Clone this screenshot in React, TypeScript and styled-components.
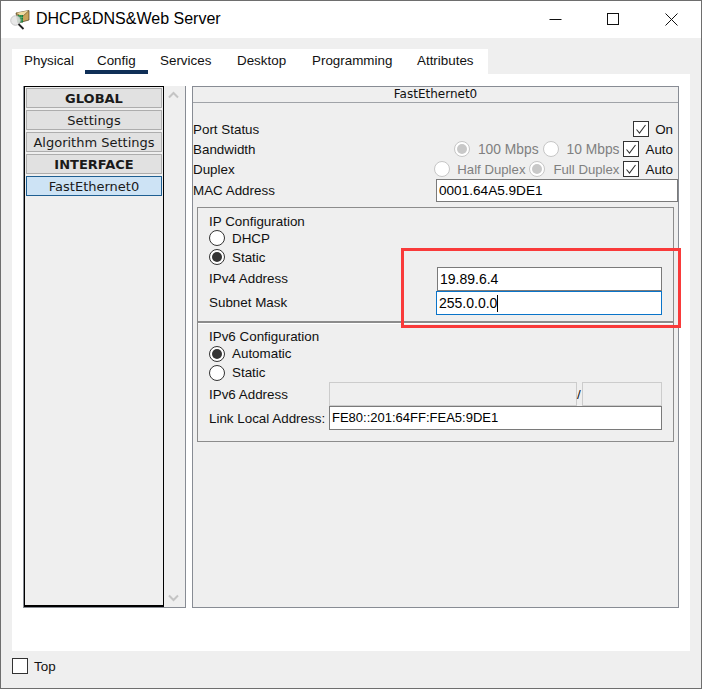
import * as React from "react";
import styled, { createGlobalStyle } from "styled-components";

const GlobalStyle = createGlobalStyle`
  html, body {
    margin: 0;
    padding: 0;
    background: #efefef;
  }
  * {
    box-sizing: border-box;
  }
`;

const UI_FONT = `"Liberation Sans", Arial, sans-serif`;
const LIST_FONT = `"DejaVu Sans", Verdana, sans-serif`;

const SWindow = styled.div`
  position: relative;
  width: 702px;
  height: 689px;
  border: 1px solid #6e6e6e;
  background: #efefef;
  font-family: ${UI_FONT};
  font-size: 13.4px;
  color: #111;
  overflow: hidden;
`;
const STitleBar = styled.div`
  height: 37px;
  background: #fff;
  display: flex;
  align-items: center;
  padding-left: 9px;
`;
const STitle = styled.div`
  margin-left: 6px;
  padding-bottom: 1px;
  font-size: 16px;
  color: #000;
  flex: 1;
`;
const SWinButtons = styled.div`
  display: flex;
  align-items: center;
  margin-right: 23px;
  gap: 45px;
`;
const SBody = styled.div`
  padding: 11px 11px 0;
`;
const STabs = styled.div`
  display: flex;
  width: 476px;
  height: 25px;
  background: #fff;
  padding-left: 12px;
`;
const STab = styled.div<{ $active?: boolean; $width: number; $mr?: number }>`
  width: ${(p) => p.$width}px;
  height: 25px;
  margin-right: ${(p) => p.$mr ?? 0}px;
  line-height: 24px;
  white-space: nowrap;
  padding-left: ${(p) => (p.$active ? 12 : 0)}px;
  border-bottom: ${(p) => (p.$active ? "4px solid #0f2f57" : "none")};
`;
const SPanel = styled.div`
  height: 577px;
  background: #fff;
  padding: 12px 11px 0;
  display: flex;
  gap: 6px;
  align-items: flex-start;
`;
const SSide = styled.div`
  width: 163px;
  height: 522px;
  display: flex;
  background: #efefef;
  border: 1px solid #888c94;
  border-top: none;
`;
const SList = styled.div`
  width: 140px;
  height: 521px;
  border: 1px solid #000;
  border-bottom-width: 2px;
  padding: 1px;
  display: flex;
  flex-direction: column;
  gap: 2px;
`;
const SListItem = styled.div<{ $head?: boolean; $active?: boolean }>`
  height: 20px;
  line-height: 19px;
  text-align: center;
  font-family: ${LIST_FONT};
  font-size: 13px;
  font-weight: ${(p) => (p.$head ? 700 : 400)};
  color: #1a1a1a;
  background: ${(p) => (p.$active ? "#cde3f5" : "#e1e1e1")};
  border: 1px solid ${(p) => (p.$active ? "#1f5f92" : "#adadad")};
  white-space: nowrap;
`;
const SScroll = styled.div`
  width: 21px;
  display: flex;
  flex-direction: column;
  justify-content: space-between;
  align-items: center;
  padding: 5px 2px 5px 0;
`;
const SMain = styled.div`
  width: 488px;
  height: 522px;
  border: 1px solid #888c94;
  background: #efefef;
`;
const SMainHead = styled.div`
  height: 15px;
  line-height: 14px;
  text-align: center;
  font-family: ${LIST_FONT};
  font-size: 12px;
  border-bottom: 1px solid #a0a3a8;
  box-sizing: content-box;
`;
const SMainContent = styled.div`
  padding-top: 16px;
`;
const SRow = styled.div<{ $h: number }>`
  height: ${(p) => p.$h}px;
  display: flex;
  align-items: center;
  justify-content: space-between;
  white-space: nowrap;
`;
const SControls = styled.div`
  display: flex;
  align-items: center;
  padding-right: 5px;
`;
const SLabel = styled.span<{ $disabled?: boolean; $ml?: number; $mr?: number; $size?: number }>`
  color: ${(p) => (p.$disabled ? "#808080" : "#111")};
  font-size: ${(p) => p.$size ?? 13.4}px;
  margin-left: ${(p) => p.$ml ?? 0}px;
  margin-right: ${(p) => p.$mr ?? 0}px;
`;
const SCheck = styled.span`
  width: 16px;
  height: 16px;
  border: 1px solid #333;
  background: #fff;
  display: inline-flex;
  align-items: center;
  justify-content: center;
  flex: none;
`;
const SRadio = styled.span<{ $on?: boolean; $disabled?: boolean }>`
  width: 16px;
  height: 16px;
  border-radius: 50%;
  border: 1px solid ${(p) => (p.$disabled ? "#c6c6c6" : "#333")};
  background: #fff;
  display: inline-flex;
  align-items: center;
  justify-content: center;
  flex: none;
  &::after {
    content: "";
    display: ${(p) => (p.$on ? "block" : "none")};
    width: 10px;
    height: 10px;
    border-radius: 50%;
    background: ${(p) => (p.$disabled ? "#c8c8c8" : "#333")};
  }
`;
const SField = styled.div<{ $w: number; $h?: number; $size?: number; $focus?: boolean; $off?: boolean }>`
  width: ${(p) => p.$w}px;
  height: ${(p) => p.$h ?? 24}px;
  flex: none;
  font-size: ${(p) => p.$size ?? 13.4}px;
  line-height: 22px;
  padding-left: ${(p) => (p.$off ? 0 : 2)}px;
  background: ${(p) => (p.$off ? "#efefef" : "#fff")};
  border: 1px solid ${(p) => (p.$focus ? "#0a74c9" : p.$off ? "#cccccc" : "#7a7a7a")};
  color: #000;
`;
const SCaret = styled.span`
  display: inline-block;
  width: 1px;
  height: 17px;
  background: #000;
  vertical-align: -4px;
`;
const SGroup = styled.div`
  width: 477px;
  height: 235px;
  margin: 5px 0 0 4px;
  border: 1px solid #8c8c8c;
`;
const SIpSection = styled.div`
  height: 115px;
  padding: 5px 11px 0;
  border-bottom: 2px solid #8c8c8c;
  box-shadow: 0 1px 0 #fff;
`;
const SIp6Section = styled.div`
  padding: 5px 11px 0;
`;
const SHeading = styled.div`
  height: 16px;
  line-height: 18px;
`;
const SRadioRow = styled.div<{ $h: number }>`
  height: ${(p) => p.$h}px;
  display: flex;
  align-items: center;
  gap: 7px;
`;
const SFieldRow = styled.div<{ $h: number }>`
  height: ${(p) => p.$h}px;
  display: flex;
  align-items: center;
  justify-content: space-between;
  white-space: nowrap;
`;
const SFieldLabel = styled.span<{ $pb?: number }>`
  padding-bottom: ${(p) => p.$pb ?? 0}px;
`;
const SFieldPair = styled.div`
  display: flex;
  align-items: center;
`;
const SSlash = styled.span`
  width: 5px;
  line-height: 24px;
  padding-top: 2px;
`;
const SFooter = styled.div`
  display: flex;
  align-items: flex-start;
  gap: 6px;
  height: 37px;
  padding-top: 7px;
  line-height: 18px;
`;
const SMark = styled.div`
  position: absolute;
  left: 400px;
  top: 247px;
  width: 280px;
  height: 80px;
  border: 3px solid #f93a3a;
  pointer-events: none;
`;

const Tick = () => (
  <svg width="12" height="12" viewBox="0 0 12 12">
    <path d="M1.5 6.5 L4.5 10 L10.5 2" fill="none" stroke="#333" strokeWidth="1.1" />
  </svg>
);

const Chevron = ({ down }: { down?: boolean }) => (
  <svg width="11" height="8" viewBox="0 0 11 8">
    <path d={down ? "M1 1.5 L5.5 6 L10 1.5" : "M1 6.5 L5.5 2 L10 6.5"} fill="none" stroke="#c4c4c4" strokeWidth="2" />
  </svg>
);

const AppIcon = () => (
  <svg width="20" height="20" viewBox="0 0 20 20">
    <path d="M6 3 L19 0.5 L19 10 L8 13 Z" fill="#c9a35a" stroke="#4d3a1a" strokeWidth="0.7" />
    <path d="M6 3 L12 7 L19 0.5" fill="#efd9a0" stroke="#5a4520" strokeWidth="0.6" />
    <rect x="7.5" y="5" width="5.5" height="7.5" fill="#1c7a3a" />
    <path d="M9.3 5v7.5M11.1 5v7.5M7.5 7.5h5.5M7.5 10h5.5" stroke="#7fc78f" strokeWidth="0.5" />
    <circle cx="5.5" cy="10.5" r="4.8" fill="#e4e4e4" fillOpacity="0.85" stroke="#bdbdbd" strokeWidth="0.8" />
    <path d="M8.5 14 L13.5 19" stroke="#222" strokeWidth="1.8" />
  </svg>
);

const WinButtons = () => (
  <SWinButtons>
    <svg width="13" height="13" viewBox="0 0 13 13">
      <path d="M0.5 6.5 H12.5" stroke="#111" strokeWidth="1" />
    </svg>
    <svg width="13" height="13" viewBox="0 0 13 13">
      <rect x="0.5" y="0.5" width="11" height="11" fill="none" stroke="#111" strokeWidth="1" />
    </svg>
    <svg width="13" height="13" viewBox="0 0 13 13">
      <path d="M0.5 0.5 L12.5 12.5 M12.5 0.5 L0.5 12.5" stroke="#111" strokeWidth="1" />
    </svg>
  </SWinButtons>
);

const tabs = [
  { name: "Physical", width: 61 },
  { name: "Config", width: 63, mr: 12, active: true },
  { name: "Services", width: 77 },
  { name: "Desktop", width: 75 },
  { name: "Programming", width: 105 },
  { name: "Attributes", width: 70 },
];

const App = () => {
  return (
    <SWindow>
      <GlobalStyle />
      <STitleBar>
        <AppIcon />
        <STitle>DHCP&amp;DNS&amp;Web Server</STitle>
        <WinButtons />
      </STitleBar>
      <SBody>
        <STabs>
          {tabs.map((tab) => (
            <STab key={tab.name} $active={tab.active} $width={tab.width} $mr={tab.mr}>
              {tab.name}
            </STab>
          ))}
        </STabs>
        <SPanel>
          <SSide>
            <SList>
              <SListItem $head>GLOBAL</SListItem>
              <SListItem>Settings</SListItem>
              <SListItem>Algorithm Settings</SListItem>
              <SListItem $head>INTERFACE</SListItem>
              <SListItem $active>FastEthernet0</SListItem>
            </SList>
            <SScroll>
              <Chevron />
              <Chevron down />
            </SScroll>
          </SSide>
          <SMain>
            <SMainHead>FastEthernet0</SMainHead>
            <SMainContent>
              <SRow $h={20}>
                <span>Port Status</span>
                <SControls>
                  <SCheck><Tick /></SCheck>
                  <SLabel $ml={6}>On</SLabel>
                </SControls>
              </SRow>
              <SRow $h={20}>
                <span>Bandwidth</span>
                <SControls>
                  <SRadio $on $disabled />
                  <SLabel $disabled $ml={8} $mr={4} $size={13.8}>100 Mbps</SLabel>
                  <SRadio $disabled />
                  <SLabel $disabled $ml={8} $mr={4} $size={13.8}>10 Mbps</SLabel>
                  <SCheck><Tick /></SCheck>
                  <SLabel $ml={6}>Auto</SLabel>
                </SControls>
              </SRow>
              <SRow $h={20}>
                <span>Duplex</span>
                <SControls>
                  <SRadio $disabled />
                  <SLabel $disabled $ml={7} $mr={4} $size={13.2}>Half Duplex</SLabel>
                  <SRadio $on $disabled />
                  <SLabel $disabled $ml={8} $mr={4} $size={13.2}>Full Duplex</SLabel>
                  <SCheck><Tick /></SCheck>
                  <SLabel $ml={6}>Auto</SLabel>
                </SControls>
              </SRow>
              <SRow $h={23}>
                <span>MAC Address</span>
                <SField $w={242} $h={23} $size={13.6}>0001.64A5.9DE1</SField>
              </SRow>
              <SGroup>
                <SIpSection>
                  <SHeading>IP Configuration</SHeading>
                  <SRadioRow $h={18}>
                    <SRadio />
                    DHCP
                  </SRadioRow>
                  <SRadioRow $h={20}>
                    <SRadio $on />
                    Static
                  </SRadioRow>
                  <SFieldRow $h={24}>
                    <SFieldLabel $pb={2}>IPv4 Address</SFieldLabel>
                    <SField $w={225} $size={14}>19.89.6.4</SField>
                  </SFieldRow>
                  <SFieldRow $h={24}>
                    <SFieldLabel $pb={2}>Subnet Mask</SFieldLabel>
                    <SField $w={226} $size={14} $focus>255.0.0.0<SCaret /></SField>
                  </SFieldRow>
                </SIpSection>
                <SIp6Section>
                  <SHeading>IPv6 Configuration</SHeading>
                  <SRadioRow $h={19}>
                    <SRadio $on />
                    Automatic
                  </SRadioRow>
                  <SRadioRow $h={19}>
                    <SRadio />
                    Static
                  </SRadioRow>
                  <SFieldRow $h={24}>
                    <SFieldLabel>IPv6 Address</SFieldLabel>
                    <SFieldPair>
                      <SField $w={248} $off />
                      <SSlash>/</SSlash>
                      <SField $w={80} $off />
                    </SFieldPair>
                  </SFieldRow>
                  <SFieldRow $h={24}>
                    <SFieldLabel>Link Local Address:</SFieldLabel>
                    <SField $w={333} $size={13}>FE80::201:64FF:FEA5:9DE1</SField>
                  </SFieldRow>
                </SIp6Section>
              </SGroup>
            </SMainContent>
          </SMain>
        </SPanel>
        <SFooter>
          <SCheck />
          Top
        </SFooter>
      </SBody>
      <SMark />
    </SWindow>
  );
};

export default App;
